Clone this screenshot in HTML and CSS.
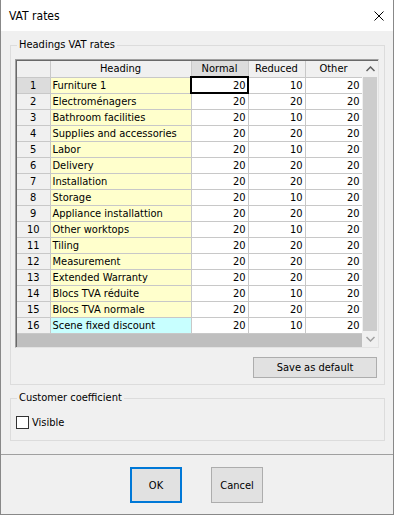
FILE: index.html
```html
<!DOCTYPE html>
<html lang="en">
<head>
  <meta charset="UTF-8">
  <title>VAT rates</title>
  <link rel="stylesheet" href="styles.css">
</head>
<body>
  <div class="window">
    <div class="titlebar">
      <span class="title">VAT rates</span>
      <svg class="close" width="10" height="10" viewBox="0 0 10 10">
        <path d="M0.5 0.5 L9.5 9.5 M9.5 0.5 L0.5 9.5" stroke="#000" stroke-width="1" fill="none"/>
      </svg>
    </div>

    <div class="content">
      <fieldset class="group rates">
        <legend>Headings VAT rates</legend>

        <div class="grid">
          <div class="grid-main">
            <table class="rates-table">
              <colgroup>
                <col class="c-num"><col class="c-head"><col class="c-val"><col class="c-val"><col class="c-val">
              </colgroup>
              <thead>
                <tr>
                  <th></th>
                  <th>Heading</th>
                  <th class="sel">Normal</th>
                  <th>Reduced</th>
                  <th>Other</th>
                </tr>
              </thead>
              <tbody id="rows"></tbody>
            </table>
            <div class="grid-empty"></div>
          </div>
          <div class="scrollbar">
            <div class="sb-btn">
              <svg width="9" height="6" viewBox="0 0 9 6"><polyline points="0.5,5 4.5,1 8.5,5" fill="none" stroke="#606060" stroke-width="1.5"/></svg>
            </div>
            <div class="sb-thumb"></div>
            <div class="sb-btn">
              <svg width="9" height="6" viewBox="0 0 9 6"><polyline points="0.5,1 4.5,5 8.5,1" fill="none" stroke="#a0a0a0" stroke-width="1.5"/></svg>
            </div>
          </div>
        </div>

        <div class="save-row">
          <button class="btn save">Save as default</button>
        </div>
      </fieldset>

      <fieldset class="group coef">
        <legend>Customer coefficient</legend>
        <label class="check"><span class="box"></span>Visible</label>
      </fieldset>
    </div>

    <div class="footer">
      <button class="btn dlg default">OK</button>
      <button class="btn dlg">Cancel</button>
    </div>
  </div>

  <script>
    const rows = [
      ['Furniture 1', 20, 10, 20],
      ['Electroménagers', 20, 20, 20],
      ['Bathroom facilities', 20, 10, 20],
      ['Supplies and accessories', 20, 20, 20],
      ['Labor', 20, 10, 20],
      ['Delivery', 20, 20, 20],
      ['Installation', 20, 20, 20],
      ['Storage', 20, 10, 20],
      ['Appliance installattion', 20, 20, 20],
      ['Other worktops', 20, 10, 20],
      ['Tiling', 20, 20, 20],
      ['Measurement', 20, 20, 20],
      ['Extended Warranty', 20, 20, 20],
      ['Blocs TVA réduite', 20, 10, 20],
      ['Blocs TVA normale', 20, 20, 20],
      ['Scene fixed discount', 20, 10, 20]
    ];

    const tbody = document.getElementById('rows');
    rows.forEach((r, i) => {
      const tr = document.createElement('tr');
      const headClass = i === rows.length - 1 ? 'head cyan' : 'head';
      tr.innerHTML =
        '<td class="num' + (i === 0 ? ' cur' : '') + '">' + (i + 1) + '</td>' +
        '<td class="' + headClass + '">' + r[0] + '</td>' +
        '<td class="val' + (i === 0 ? ' focus' : '') + '">' + r[1] + '</td>' +
        '<td class="val">' + r[2] + '</td>' +
        '<td class="val">' + r[3] + '</td>';
      tbody.appendChild(tr);
    });
  </script>
</body>
</html>
```

FILE: styles.css
```css
* {
  box-sizing: border-box;
}
body {
  margin: 0;
  font-family: "DejaVu Sans Condensed", "Liberation Sans", sans-serif;
  font-size: 11px;
  color: #000;
}
.window {
  width: 394px;
  height: 515px;
  display: flex;
  flex-direction: column;
  background: #f0f0f0;
  border: 1px solid #888;
  border-top: none;
}
.titlebar {
  height: 31px;
  background: #fff;
  display: flex;
  align-items: center;
  justify-content: space-between;
  padding: 0 9px 0 8px;
  font-size: 12px;
}
.close {
  display: block;
}
.content {
  padding: 0 8px 0 9px;
}
.group {
  margin: 0;
  border: 1px solid #dcdcdc;
  min-width: 0;
}
.group legend {
  padding: 0 2px;
  line-height: 14px;
}
.rates {
  margin-top: 7px;
  padding: 7px 5px 6px 4px;
}
.rates legend {
  margin-left: 2px;
}

/* grid */
.grid {
  display: flex;
  border: 1px solid #a0a0a0;
  border-right-color: #e3e3e3;
  border-bottom-color: #e3e3e3;
  box-shadow: inset 1px 1px 0 #696969;
  padding: 1px 0 0 1px;
  height: 289px;
}
.grid-main {
  width: 345px;
  display: flex;
  flex-direction: column;
}
.rates-table {
  border-collapse: collapse;
  table-layout: fixed;
  width: 345px;
}
.c-num { width: 33px; }
.c-head { width: 141px; }
.c-val { width: 57px; }
.rates-table th,
.rates-table td {
  height: 16px;
  padding: 0;
  border-right: 1px solid #c8c8c8;
  border-bottom: 1px solid #c8c8c8;
  font-weight: normal;
  white-space: nowrap;
  overflow: hidden;
  line-height: 15px;
}
.rates-table th {
  background: #f0f0f0;
  text-align: center;
}
.rates-table th.sel {
  background: #dcdcdc;
}
.num {
  background: #f0f0f0;
  text-align: center;
}
.num.cur {
  background: #dcdcdc;
}
.head {
  background: #ffffcc;
  padding-left: 2px !important;
}
.head.cyan {
  background: #c8ffff;
}
.val {
  background: #fff;
  text-align: right;
  padding-right: 2px !important;
}
.val.focus {
  outline: 2px solid #000;
  outline-offset: -1px;
}
.grid-empty {
  flex: 1;
  background: #bfbfbf;
}
.scrollbar {
  width: 16px;
  display: flex;
  flex-direction: column;
  background: #f0f0f0;
}
.sb-btn {
  height: 16px;
  display: flex;
  align-items: center;
  justify-content: center;
}
.sb-thumb {
  flex: 1;
  margin: 0 1px;
  background: #cdcdcd;
}

.save-row {
  display: flex;
  justify-content: flex-end;
  margin-top: 9px;
  padding-right: 2px;
}
.btn {
  font-family: inherit;
  font-size: 11px;
  color: #000;
  background: #e1e1e1;
  border: 1px solid #adadad;
  padding: 0;
  margin: 0;
}
.save {
  width: 124px;
  height: 21px;
}

.coef {
  margin-top: 6px;
  padding: 11px 5px 11px 5px;
}
.coef legend {
  margin-left: 1px;
}
.check {
  display: flex;
  align-items: center;
  gap: 3px;
}
.box {
  width: 13px;
  height: 13px;
  background: #fff;
  border: 1px solid #333;
}

.footer {
  margin-top: 13px;
  flex: 1;
  border-top: 1px solid #a0a0a0;
  display: flex;
  justify-content: center;
  gap: 29px;
  padding: 12px 1px 0 0;
}
.dlg {
  width: 52px;
  height: 36px;
}
.dlg.default {
  border: 2px solid #0078d7;
}
```
